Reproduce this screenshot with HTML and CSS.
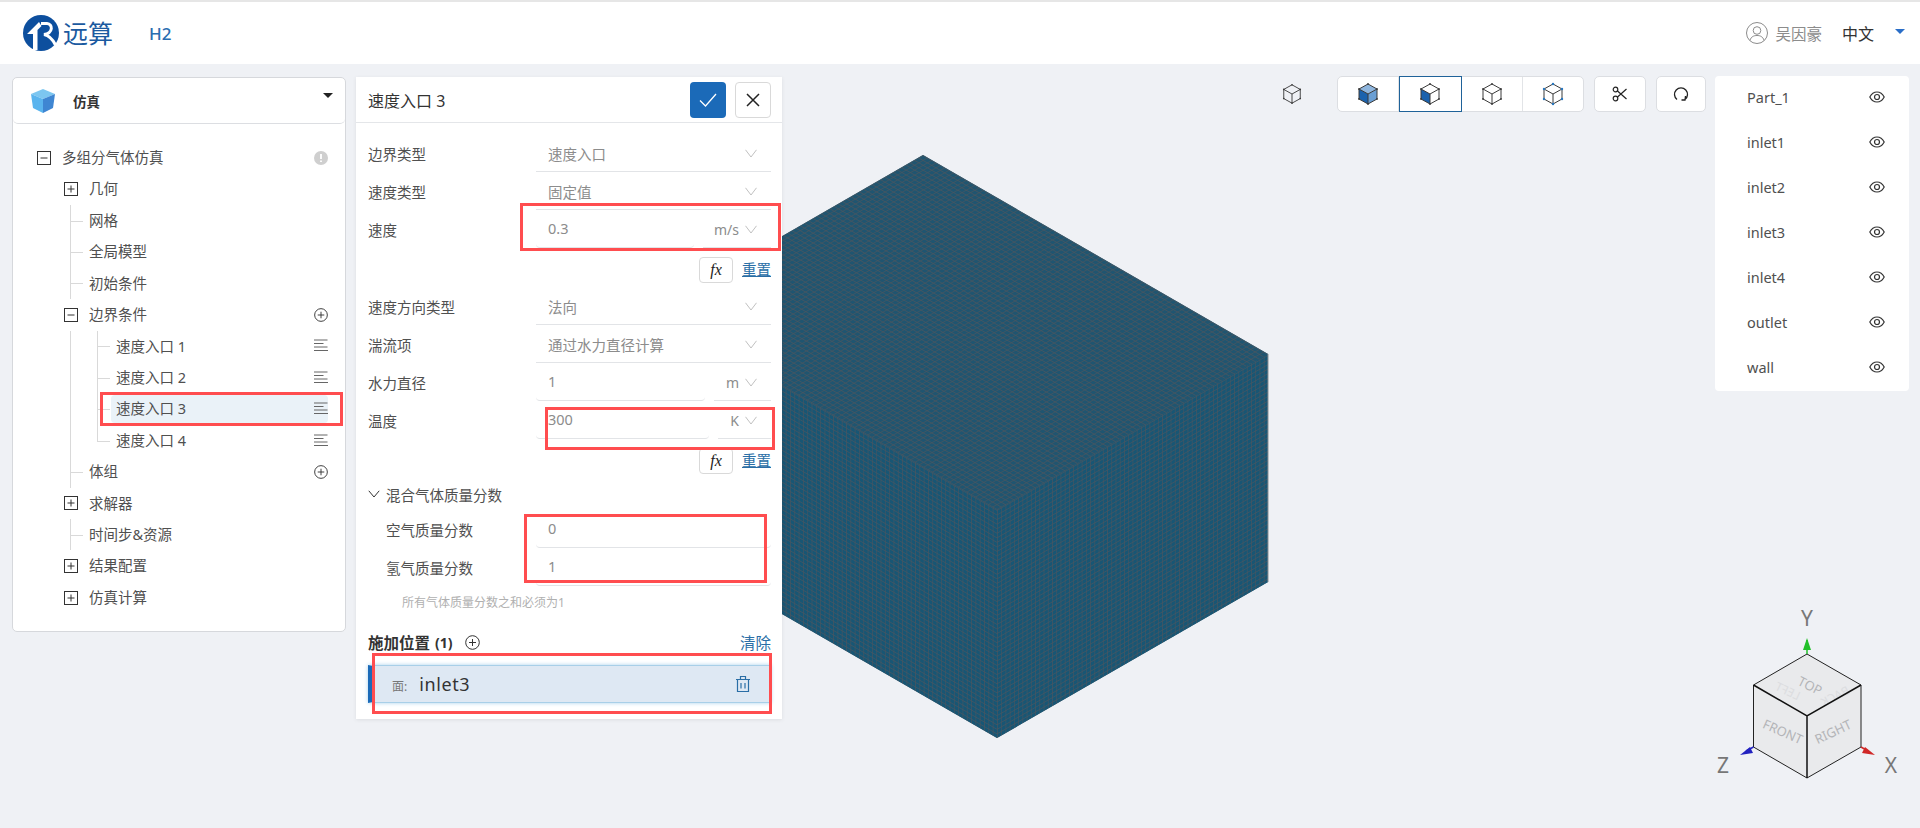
FILE: index.html
```html
<!DOCTYPE html>
<html lang="zh">
<head>
<meta charset="utf-8">
<title>远算 H2</title>
<link rel="stylesheet" href="styles.css">
</head>
<body>
<svg class="defs" width="0" height="0" aria-hidden="true">
  <defs>
    <symbol id="i-plusbox" viewBox="0 0 14 14"><rect x=".5" y=".5" width="13" height="13" fill="#fff" stroke="#333"/><path d="M3.5 7h7M7 3.5v7" stroke="#333" fill="none"/></symbol>
    <symbol id="i-minusbox" viewBox="0 0 14 14"><rect x=".5" y=".5" width="13" height="13" fill="#fff" stroke="#333"/><path d="M3.5 7h7" stroke="#333" fill="none"/></symbol>
    <symbol id="i-plus" viewBox="0 0 15 15"><circle cx="7.5" cy="7.5" r="6.8" fill="none" stroke="#333"/><path d="M4 7.5h7M7.5 4v7" stroke="#333" fill="none"/></symbol>
    <symbol id="i-list" viewBox="0 0 14 14"><path d="M0 1h13.500M0 4.500h9.500M0 8h13.500M0 11.500h14" stroke="#666" fill="none"/></symbol>
    <symbol id="i-chev" viewBox="0 0 12 9"><path d="M.5 .8 6 8 11.500 .8" stroke="#c0c0c0" fill="none"/></symbol>
    <symbol id="i-eye" viewBox="0 0 16 12"><path d="M.8 6C2.500 2.700 5 1 8 1s5.500 1.700 7.200 5C13.500 9.300 11 11 8 11S2.500 9.300 .8 6Z" fill="none" stroke="#333" stroke-width="1.200"/><circle cx="8" cy="6" r="2.500" fill="none" stroke="#333" stroke-width="1.200"/></symbol>
    <symbol id="i-wire" viewBox="0 0 24 24"><path d="M12 2 21 7V17L12 22 3 17V7ZM3 7 12 12 21 7M12 12V22" fill="none" stroke="#3a3a3a"/><g fill="#3a3a3a"><circle cx="12" cy="2" r=".9"/><circle cx="21" cy="7" r=".9"/><circle cx="21" cy="17" r=".9"/><circle cx="12" cy="22" r=".9"/><circle cx="3" cy="17" r=".9"/><circle cx="3" cy="7" r=".9"/></g></symbol>
  </defs>
</svg>
<div class="app">
  <header class="topbar">
    <div class="brand">
      <svg class="logo" viewBox="0 0 36 36"><circle cx="18" cy="18" r="18" fill="#0d4f9e"/><polygon points="4,19 16,7 18.500,11 14.500,15 14.500,35 10,35 10,19" fill="#fff"/><path d="M18 8.500H24C30 9 30.500 18 21 19.500C27 20.500 30 25 32.500 30" fill="none" stroke="#fff" stroke-width="3"/></svg>
      <span class="wordmark">远算</span>
      <span class="project">H2</span>
    </div>
    <div class="account">
      <svg class="user" viewBox="0 0 22 22"><circle cx="11" cy="11" r="10.500" fill="none" stroke="#8c8c8c"/><circle cx="11" cy="8.500" r="3.800" fill="none" stroke="#8c8c8c"/><path d="M4 18.500C5 14.500 8 13.500 11 13.500s6 1 7 5" fill="none" stroke="#8c8c8c"/></svg>
      <span class="username">吴因豪</span>
      <span class="lang">中文</span>
      <span class="lang-caret"></span>
    </div>
  </header>
  <main class="workspace">
    <svg class="canvas" viewBox="0 64 1920 764" width="1920" height="764">
      <defs>
        <pattern id="mesh-top" patternUnits="userSpaceOnUse" width="10" height="10" patternTransform="matrix(.43125 .24875 -.4234 .2422 923 155)"><rect width="10" height="10" fill="#205570"/><path d="M0 0H10M0 0V10" stroke="#4b555e" stroke-width="2.800"/></pattern>
        <pattern id="mesh-left" patternUnits="userSpaceOnUse" width="10" height="10" patternTransform="matrix(.43125 .24875 0 .456 652 311)"><rect width="10" height="10" fill="#185674"/><path d="M0 0H10M0 0V10" stroke="#4b555e" stroke-width="2.800"/></pattern>
        <pattern id="mesh-right" patternUnits="userSpaceOnUse" width="10" height="10" patternTransform="matrix(.4234 -.2422 0 .456 997 510)"><rect width="10" height="10" fill="#185674"/><path d="M0 0H10M0 0V10" stroke="#4b555e" stroke-width="2.800"/></pattern>
      </defs>
      <polygon points="923,155 1268,354 1268,582 997,738 652,539 652,311" fill="#2a5870"/>
      <polygon points="923,155 1268,354 997,510 652,311" fill="url(#mesh-top)"/>
      <polygon points="652,311 997,510 997,738 652,539" fill="url(#mesh-left)"/>
      <polygon points="997,510 1268,354 1268,582 997,738" fill="url(#mesh-right)"/>
      <path d="M1268 354V582" stroke="#8a9095" fill="none"/>

      <polygon points="1807,654 1861,685 1861,747 1807,778 1753.500,747 1753.500,685" fill="#e9eaec"/>
      <text class="cube-ghost" transform="translate(1786 695) rotate(25) scale(-1 1)" text-anchor="middle">LEFT</text>
      <text class="cube-ghost" transform="translate(1837 700) rotate(-27) scale(-1 1)" text-anchor="middle">BACK</text>
      <text class="cube-face" transform="translate(1808 690) rotate(27)" text-anchor="middle">TOP</text>
      <text class="cube-face" transform="translate(1781 736) rotate(24)" text-anchor="middle">FRONT</text>
      <text class="cube-face" transform="translate(1835 736) rotate(-25)" text-anchor="middle">RIGHT</text>
      <path d="M1807 654 1861 685M1807 654 1753.500 685M1753.500 685V747L1807 778 1861 747V685" fill="none" stroke="#222"/>
      <path d="M1753.500 685 1807 716 1861 685M1807 716V778" fill="none" stroke="#111" stroke-width="1.500"/>
      <path d="M1807 654V640" stroke="#22c02a" stroke-width="1.500"/>
      <polygon points="1807,638 1811,650 1803,650" fill="#22c02a"/>
      <path d="M1753.500 747 1746 751" stroke="#2222c0" stroke-width="1.500"/>
      <polygon points="1740,755 1750,747 1753,753" fill="#2222c0"/>
      <path d="M1861 747 1868 751" stroke="#d02828" stroke-width="1.500"/>
      <polygon points="1875,755 1865,747 1862,753" fill="#d02828"/>
      <text class="axis" x="1807" y="626" text-anchor="middle">Y</text>
      <text class="axis" x="1723" y="773" text-anchor="middle">Z</text>
      <text class="axis" x="1891" y="773" text-anchor="middle">X</text>
    </svg>

    <aside class="tree-panel">
      <div class="tree-head">
        <svg class="head-cube" viewBox="0 0 24 24"><polygon points="12,0 24,5 12,10 0,5" fill="#7cc6f0"/><polygon points="0,5 12,10 12,24 2,19" fill="#5ab4ee"/><polygon points="24,5 12,10 12,24 22,19" fill="#3f86d2"/></svg>
        <span class="head-title">仿真</span>
        <span class="head-caret"></span>
      </div>
      <div class="tree">
        <div class="row"><svg class="box"><use href="#i-minusbox"/></svg><span class="text">多组分气体仿真</span><svg class="warn" viewBox="0 0 14 14"><circle cx="7" cy="7" r="7" fill="#cfcfcf"/><path d="M7 3v5M7 9.500v1.500" stroke="#fff" stroke-width="1.800"/></svg></div>
        <div class="row lvl1"><svg class="box"><use href="#i-plusbox"/></svg><span class="text">几何</span></div>
        <div class="branch">
          <div class="row leaf"><span class="text">网格</span></div>
          <div class="row leaf"><span class="text">全局模型</span></div>
          <div class="row leaf"><span class="text">初始条件</span></div>
        </div>
        <div class="row lvl1"><svg class="box"><use href="#i-minusbox"/></svg><span class="text">边界条件</span><svg class="act"><use href="#i-plus"/></svg></div>
        <div class="branch">
          <div class="branch nested">
            <div class="row leaf sub"><div class="body"><span class="text">速度入口 1</span><svg class="act"><use href="#i-list"/></svg></div></div>
            <div class="row leaf sub"><div class="body"><span class="text">速度入口 2</span><svg class="act"><use href="#i-list"/></svg></div></div>
            <div class="row leaf sub"><div class="body selected"><span class="text">速度入口 3</span><svg class="act"><use href="#i-list"/></svg></div></div>
            <div class="row leaf sub tail"><div class="body"><span class="text">速度入口 4</span><svg class="act"><use href="#i-list"/></svg></div></div>
          </div>
          <div class="row leaf"><span class="text">体组</span><svg class="act"><use href="#i-plus"/></svg></div>
        </div>
        <div class="row lvl1"><svg class="box"><use href="#i-plusbox"/></svg><span class="text">求解器</span></div>
        <div class="branch">
          <div class="row leaf"><span class="text">时间步&amp;资源</span></div>
        </div>
        <div class="row lvl1"><svg class="box"><use href="#i-plusbox"/></svg><span class="text">结果配置</span></div>
        <div class="row lvl1"><svg class="box"><use href="#i-plusbox"/></svg><span class="text">仿真计算</span></div>
      </div>
    </aside>

    <section class="form-panel">
      <div class="form-head">
        <span class="form-title">速度入口 3</span>
        <button class="btn-ok" type="button"><svg viewBox="0 0 18 14" width="18" height="14"><path d="M1 7.500 6.500 13 17 1" fill="none" stroke="#fff" stroke-width="1.300"/></svg></button>
        <button class="btn-close" type="button"><svg viewBox="0 0 14 14" width="14" height="14"><path d="M1 1 13 13M13 1 1 13" fill="none" stroke="#222" stroke-width="1.500"/></svg></button>
      </div>
      <div class="form-body">
        <div class="field"><span class="label">边界类型</span><div class="control line"><span class="value">速度入口</span><svg class="chev"><use href="#i-chev"/></svg></div></div>
        <div class="field"><span class="label">速度类型</span><div class="control line"><span class="value">固定值</span><svg class="chev"><use href="#i-chev"/></svg></div></div>
        <div class="field"><span class="label">速度</span><div class="control"><span class="num line">0.3</span><span class="unit unit-ms line">m/s<svg class="chev"><use href="#i-chev"/></svg></span></div></div>
        <div class="fx-row"><span class="fx">fx</span><a class="reset">重置</a></div>
        <div class="field"><span class="label">速度方向类型</span><div class="control line"><span class="value">法向</span><svg class="chev"><use href="#i-chev"/></svg></div></div>
        <div class="field"><span class="label">湍流项</span><div class="control line"><span class="value">通过水力直径计算</span><svg class="chev"><use href="#i-chev"/></svg></div></div>
        <div class="field"><span class="label">水力直径</span><div class="control"><span class="num line">1</span><span class="unit unit-m line">m<svg class="chev"><use href="#i-chev"/></svg></span></div></div>
        <div class="field"><span class="label">温度</span><div class="control"><span class="num line">300</span><span class="unit unit-k line">K<svg class="chev"><use href="#i-chev"/></svg></span></div></div>
        <div class="fx-row"><span class="fx">fx</span><a class="reset">重置</a></div>
        <div class="collapse"><svg class="collapse-chev" viewBox="0 0 12 8"><path d="M.8 .8 6 7 11.200 .8" fill="none" stroke="#333"/></svg><span>混合气体质量分数</span></div>
        <div class="field indented"><span class="label">空气质量分数</span><div class="control"><span class="num line">0</span></div></div>
        <div class="field indented"><span class="label">氢气质量分数</span><div class="control"><span class="num line">1</span></div></div>
        <p class="hint">所有气体质量分数之和必须为1</p>
        <div class="apply-head"><strong class="apply-title">施加位置</strong><strong class="apply-count">(1)</strong><svg class="apply-add"><use href="#i-plus"/></svg><a class="clear">清除</a></div>
        <div class="apply-item"><span class="apply-kind">面:</span><span class="apply-name">inlet3</span>
          <svg class="trash" viewBox="0 0 16 18"><path d="M1 4.500H15M5.500 4.500V1.500H10.500V4.500M2.500 4.500V16.500H13.500V4.500M6 8V13.500M10 8V13.500" fill="none" stroke="#2a6ea6" stroke-width="1.200"/></svg></div>
      </div>
    </section>

    <div class="stage">
      <svg class="view-cube"><use href="#i-wire"/></svg>
      <div class="seg">
        <button class="seg-btn" type="button"><svg viewBox="0 0 24 24" width="24" height="24"><polygon points="12,2 21,7 12,12 3,7" fill="#8fb6de"/><polygon points="3,7 12,12 12,22 3,17" fill="#1b62ad"/><polygon points="21,7 12,12 12,22 21,17" fill="#6a9fd4"/><use href="#i-wire"/></svg></button>
        <button class="seg-btn active" type="button"><svg viewBox="0 0 24 24" width="24" height="24"><polygon points="3,7 12,12 12,22 3,17" fill="#1b62ad"/><use href="#i-wire"/></svg></button>
        <button class="seg-btn" type="button"><svg width="24" height="24"><use href="#i-wire"/></svg></button>
        <button class="seg-btn" type="button"><svg viewBox="0 0 24 24" width="24" height="24"><use href="#i-wire"/><g fill="#2a78c0"><circle cx="12" cy="2" r="1.200"/><circle cx="21" cy="7" r="1.200"/><circle cx="21" cy="17" r="1.200"/><circle cx="12" cy="22" r="1.200"/><circle cx="3" cy="17" r="1.200"/><circle cx="3" cy="7" r="1.200"/></g></svg></button>
      </div>
      <button class="tool tool-cut" type="button"><svg viewBox="0 0 16 16" width="16" height="16"><circle cx="3.500" cy="3.500" r="2.300" fill="none" stroke="#222" stroke-width="1.200"/><circle cx="3.500" cy="12.500" r="2.300" fill="none" stroke="#222" stroke-width="1.200"/><path d="M5.500 5 14.500 13M5.500 11 14.500 3" stroke="#222" stroke-width="1.200" fill="none"/></svg></button>
      <button class="tool tool-reset" type="button"><svg viewBox="0 0 16 16" width="16" height="16"><path d="M4 13.500A6.500 6.500 0 1 1 12 13.500M12.500 10 12 14H8.500" fill="none" stroke="#222" stroke-width="1.300"/></svg></button>
    </div>

    <aside class="parts">
      <div class="part"><span>Part_1</span><svg class="eye"><use href="#i-eye"/></svg></div>
      <div class="part"><span>inlet1</span><svg class="eye"><use href="#i-eye"/></svg></div>
      <div class="part"><span>inlet2</span><svg class="eye"><use href="#i-eye"/></svg></div>
      <div class="part"><span>inlet3</span><svg class="eye"><use href="#i-eye"/></svg></div>
      <div class="part"><span>inlet4</span><svg class="eye"><use href="#i-eye"/></svg></div>
      <div class="part"><span>outlet</span><svg class="eye"><use href="#i-eye"/></svg></div>
      <div class="part"><span>wall</span><svg class="eye"><use href="#i-eye"/></svg></div>
    </aside>
  </main>

  <div class="mark mark-tree"></div>
  <div class="mark mark-speed"></div>
  <div class="mark mark-temp"></div>
  <div class="mark mark-frac"></div>
  <div class="mark mark-apply"></div>
</div>
</body>
</html>
```

FILE: styles.css
```css
* { box-sizing: border-box; }
html, body { margin: 0; height: 100%; }
body {
  overflow: hidden;
  background: #eff1f5;
  color: #505050;
  font-family: "Noto Sans", "Noto Sans CJK SC", sans-serif;
  font-size: 14.5px;
}
.defs { position: absolute; }
.app { position: relative; width: 1920px; height: 828px; }

/* top bar */
.topbar {
  height: 64px;
  border-top: 2px solid #e6e6e6;
  background: #fff;
  display: flex;
  align-items: center;
  justify-content: space-between;
  padding: 0 15px 0 23px;
}
.brand, .account { display: flex; align-items: center; }
.logo { width: 36px; height: 36px; }
.wordmark { margin-left: 4px; font-size: 25px; line-height: 36px; color: #1b5aa0; }
.project { margin-left: 36px; font-size: 17px; font-weight: 500; color: #2a6db0; }
.user { width: 22px; height: 22px; }
.username { margin-left: 7px; font-size: 15.5px; color: #8c8c8c; }
.lang { margin-left: 20px; font-size: 16px; color: #333; }
.lang-caret {
  margin-left: 21px;
  margin-top: -4px;
  border-left: 5px solid transparent;
  border-right: 5px solid transparent;
  border-top: 5px solid #2a6ec8;
}

/* workspace */
.workspace {
  position: relative;
  height: 764px;
  display: flex;
  align-items: flex-start;
  padding: 13px 11px 0 12px;
}
.canvas { position: absolute; left: 0; top: 0; }
.cube-face { font: 13px "Noto Sans", sans-serif; fill: #b4b5b8; }
.cube-ghost { font: 12px "Noto Sans", sans-serif; fill: #dcdde0; }
.axis { font: 21px "Noto Sans", sans-serif; fill: #777; }

/* tree */
.tree-panel {
  position: relative;
  width: 334px;
  height: 555px;
  background: #fff;
  border: 1px solid #d6d8dc;
  border-radius: 5px;
}
.tree-head {
  height: 46px;
  display: flex;
  align-items: center;
  padding: 0 12px 0 18px;
  border-bottom: 1px solid #dcdee2;
  border-radius: 5px;
}
.head-cube { width: 24px; height: 24px; }
.head-title { margin-left: 18px; font-size: 13.500px; font-weight: 700; color: #333; }
.head-caret {
  margin-left: auto;
  margin-top: -11px;
  border-left: 5px solid transparent;
  border-right: 5px solid transparent;
  border-top: 5px solid #222;
}
.tree { padding: 18px 17px 0 24px; }
.row {
  position: relative;
  height: 31.43px;
  display: flex;
  align-items: center;
}
.row .text { line-height: 31.43px; }
.box { width: 14px; height: 14px; margin-right: 11px; flex: none; }
.lvl1 { margin-left: 27px; }
.warn { width: 14px; height: 14px; margin-left: auto; }
.act { width: 14px; height: 14px; margin-left: auto; flex: none; }
.branch { margin-left: 33px; border-left: 1px solid #d9d9d9; }
.branch.nested { margin-left: 26px; }
.leaf { padding-left: 18px; }
.leaf::before {
  content: "";
  position: absolute;
  left: 0;
  top: 50%;
  width: 12px;
  border-top: 1px solid #d9d9d9;
}
.sub { padding-left: 13px; }
.tail::after {
  content: "";
  position: absolute;
  left: -1px;
  top: calc(50% + 1px);
  bottom: 0;
  width: 1px;
  background: #fff;
}
.body {
  flex: 1;
  height: 28px;
  display: flex;
  align-items: center;
  padding-left: 5px;
  border-radius: 4px;
}
.selected { background: #eaf2f8; }

/* form */
.form-panel {
  position: relative;
  width: 426px;
  height: 642px;
  margin-left: 10px;
  background: #fff;
  box-shadow: 0 1px 4px rgba(0, 0, 0, .08);
}
.form-head {
  height: 46px;
  display: flex;
  align-items: center;
  padding: 0 11px 0 12px;
  border-bottom: 1px solid #e4e6e9;
}
.form-title { font-size: 16px; color: #333; margin-right: auto; }
.btn-ok, .btn-close {
  width: 36px;
  height: 36px;
  padding: 0;
  display: flex;
  align-items: center;
  justify-content: center;
  border-radius: 4px;
}
.btn-ok { background: #1b6ab8; border: 0; }
.btn-close { margin-left: 9px; background: #fff; border: 1px solid #d9d9d9; }
.form-body { padding: 11px 11px 0 12px; }
.field { display: flex; height: 38px; }
.label { width: 168px; flex: none; line-height: 41px; }
.indented .label { padding-left: 18px; }
.control { flex: 1; display: flex; min-width: 0; }
.line { border-bottom: 1px solid #e2e4e7; }
.control.line { align-items: center; padding: 2px 14px 0 12px; }
.value { color: #8c8c8c; margin-right: auto; }
.chev { width: 12px; height: 9px; flex: none; }
.num {
  flex: 1;
  display: flex;
  align-items: center;
  padding: 0 0 2px 12px;
  border-radius: 0 0 4px 4px;
  color: #8c8c8c;
}
.unit {
  display: flex;
  align-items: center;
  justify-content: flex-end;
  gap: 6px;
  margin-left: 9px;
  padding: 2px 14px 0 0;
  color: #8c8c8c;
  font-size: 14px;
}
.unit-ms { width: 68px; }
.unit-m { width: 57px; }
.unit-k { width: 53px; }
.fx-row { height: 39px; display: flex; justify-content: flex-end; align-items: flex-start; padding-top: 9px; }
.fx {
  width: 34px;
  height: 26px;
  border: 1px solid #d9d9d9;
  border-radius: 4px;
  text-align: center;
  font: italic 16px/24px "Liberation Serif", serif;
  color: #222;
}
.reset { margin-left: 9px; line-height: 24px; color: #2a6ea6; text-decoration: underline; }
.collapse { height: 32px; display: flex; align-items: center; }
.collapse-chev { width: 12px; height: 8px; margin-right: 6px; }
.hint { margin: 0; height: 34px; padding-left: 34px; font-size: 12px; line-height: 34px; color: #b0b0b0; }
.apply-head { height: 45px; display: flex; align-items: center; }
.apply-title { font-size: 15.5px; font-weight: 700; color: #333; }
.apply-count { margin-left: 5px; font-size: 14px; font-weight: 700; color: #333; }
.apply-add { width: 15px; height: 15px; margin-left: 12px; }
.clear { margin-left: auto; font-size: 15.5px; color: #2a6ea6; }
.apply-item {
  height: 38px;
  display: flex;
  align-items: center;
  padding: 0 20px 0 20px;
  background: #dee8f3;
  border-left: 4px solid #1b6ab8;
  border-top: 1px solid #a8cfe8;
  border-bottom: 1px solid #a8cfe8;
  box-shadow: 0 0 4px #a8d0ec;
}
.apply-kind { font-size: 12px; color: #777; margin-top: 3px; }
.apply-name { margin-left: 12px; font-size: 18px; color: #333; letter-spacing: .6px; }
.trash { width: 16px; height: 18px; margin-left: auto; }

/* toolbar */
.stage {
  position: relative;
  flex: 1;
  height: 36px;
  display: flex;
  align-items: center;
  justify-content: flex-end;
  margin-top: -1px;
  padding-right: 9px;
}
.view-cube { width: 22px; height: 22px; margin-right: 34px; }
.seg {
  display: flex;
  height: 36px;
  width: 247px;
  background: #fff;
  border: 1px solid #dcdee2;
  border-radius: 5px;
}
.seg-btn {
  flex: 1;
  padding: 0;
  border: 0;
  border-right: 1px solid #e2e4e7;
  background: transparent;
  display: flex;
  align-items: center;
  justify-content: center;
}
.seg-btn:last-child { border-right: 0; }
.seg-btn.active { margin: -1px 0; border: 1px solid #1f6299; }
.tool {
  height: 36px;
  padding: 0;
  display: flex;
  align-items: center;
  justify-content: center;
  background: #fff;
  border: 1px solid #dcdee2;
  border-radius: 5px;
}
.tool-cut { width: 52px; margin-left: 10px; }
.tool-reset { width: 50px; margin-left: 10px; }

/* parts */
.parts {
  position: relative;
  width: 194px;
  height: 315px;
  margin-top: -1px;
  background: #fff;
  border-radius: 4px;
}
.part {
  height: 45px;
  display: flex;
  align-items: center;
  justify-content: space-between;
  padding: 0 24px 4px 32px;
  color: #505050;
}
.eye { width: 16px; height: 12px; }

/* annotation boxes */
.mark { position: absolute; border: 3px solid #ff4d4f; pointer-events: none; }
.mark-tree { left: 100px; top: 392px; width: 243px; height: 34px; }
.mark-speed { left: 520px; top: 203px; width: 261px; height: 48px; }
.mark-temp { left: 545px; top: 407px; width: 230px; height: 43px; }
.mark-frac { left: 524px; top: 514px; width: 243px; height: 69px; }
.mark-apply { left: 372px; top: 653px; width: 400px; height: 61px; }
```
